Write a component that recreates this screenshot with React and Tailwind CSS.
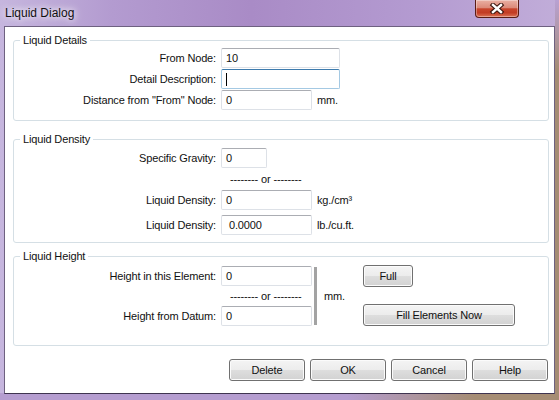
const box =
  "h-[20px] border border-[#dde1e7] border-t-[#abadb3] rounded-[2px] bg-white flex items-center pl-[4px]";
const btn =
  "h-[22px] border border-[#707070] rounded-[3px] bg-[linear-gradient(180deg,#f4f4f4_0%,#ececec_50%,#dedede_50%,#d2d2d2_100%)] shadow-[inset_0_0_0_1px_#fbfbfb] flex items-center justify-center";

const Label = ({ children }) => (
  <div className="w-[203px] text-right pr-[1px]">{children}</div>
);

const Legend = ({ children }) => (
  <legend className="ml-[6px] px-[3px] leading-[13px]">{children}</legend>
);

const Or = () => <div className="pl-[9px]">-------- or --------</div>;

export default function App() {
  return (
    <div className="w-[559px] h-[400px] flex flex-col text-[#111] font-['Liberation_Sans',Arial,sans-serif] text-[11px] tracking-[-0.15px] [background:linear-gradient(180deg,#b8a1d2_0px,#a58c73_70px)_right_top/4px_100%_no-repeat,linear-gradient(90deg,#b59dd0_62%,#a68d74_85%)_left_bottom/100%_7px_no-repeat,linear-gradient(90deg,#c6b6de_0%,#b39bd0_20%,#a98bc6_45%,#b49bd1_75%,#c1add9_100%)]">
      {/* title bar */}
      <div className="h-[26px] flex items-start justify-between">
        <span className="pl-[5px] pt-[4px] text-[12px] tracking-normal [text-shadow:0_0_6px_#fff,0_0_10px_rgba(255,255,255,0.9)]">
          Liquid Dialog
        </span>
        <div className="mr-[40px] w-[44px] h-[18px] border border-t-0 border-[#5a1c14] rounded-b-[4px] bg-[linear-gradient(180deg,#eab0a3_0%,#dc8a79_45%,#c8452c_52%,#c23c24_75%,#dc7356_100%)] shadow-[inset_0_0_0_1px_rgba(255,255,255,0.35)] flex items-center justify-center">
          <svg width="16" height="11" viewBox="0 0 16 11">
            <path d="M4 2 L12 9 M12 2 L4 9" stroke="#3e1710" strokeWidth="4.6" strokeLinecap="square" />
            <path d="M4 2 L12 9 M12 2 L4 9" stroke="#ffffff" strokeWidth="2.4" strokeLinecap="square" />
          </svg>
        </div>
      </div>

      {/* client area */}
      <div className="ml-[4px] w-[551px] h-[368px] border border-[#6e6180] border-b-[#3f3450] bg-white flex flex-col">
        {/* Liquid Details */}
        <fieldset className="ml-[8px] mt-[7px] w-[536px] border border-[#d5dfe5] rounded-[3px] pt-[1px] pb-[10px]">
          <Legend>Liquid Details</Legend>
          <div className="flex flex-col gap-[1px]">
            <div className="flex items-center gap-[4px]">
              <Label>From Node:</Label>
              <div className={`${box} w-[119px]`}>10</div>
            </div>
            <div className="flex items-center gap-[4px]">
              <Label>Detail Description:</Label>
              <div className="h-[20px] w-[119px] border border-[#a4c9e3] border-t-[#3d7bad] rounded-[2px] bg-white flex items-center pl-[4px]">
                <span className="w-[1px] h-[13px] bg-black" />
              </div>
            </div>
            <div className="flex items-center gap-[4px]">
              <Label>Distance from "From" Node:</Label>
              <div className={`${box} w-[91px]`}>0</div>
              <span className="ml-[1px]">mm.</span>
            </div>
          </div>
        </fieldset>

        {/* Liquid Density */}
        <fieldset className="ml-[8px] mt-[12px] w-[536px] border border-[#d5dfe5] rounded-[3px] pt-[2px] pb-[7px]">
          <Legend>Liquid Density</Legend>
          <div className="flex flex-col">
            <div className="flex items-center gap-[4px]">
              <Label>Specific Gravity:</Label>
              <div className={`${box} w-[46px]`}>0</div>
            </div>
            <div className="h-[22px] flex items-center pl-[207px]">
              <Or />
            </div>
            <div className="flex items-center gap-[4px]">
              <Label>Liquid Density:</Label>
              <div className={`${box} w-[91px]`}>0</div>
              <span className="ml-[1px]">kg./cm³</span>
            </div>
            <div className="flex items-center gap-[4px] mt-[5px]">
              <Label>Liquid Density:</Label>
              <div className={`${box} w-[91px] pl-[7px]`}>0.0000</div>
              <span className="ml-[1px]">lb./cu.ft.</span>
            </div>
          </div>
        </fieldset>

        {/* Liquid Height */}
        <fieldset className="ml-[8px] mt-[7px] w-[536px] border border-[#d5dfe5] rounded-[3px] pt-[3px] pb-[19px]">
          <Legend>Liquid Height</Legend>
          <div className="flex">
            <div className="flex flex-col">
              <div className="flex items-center gap-[4px]">
                <Label>Height in this Element:</Label>
                <div className={`${box} w-[91px]`}>0</div>
              </div>
              <div className="h-[20px] flex items-center pl-[207px]">
                <Or />
              </div>
              <div className="flex items-center gap-[4px]">
                <Label>Height from Datum:</Label>
                <div className={`${box} w-[91px]`}>0</div>
              </div>
            </div>
            <div className="ml-[2px] w-[3px] mt-[1px] mb-[1px] bg-[#a3a3a3]" />
            <div className="ml-[7px] w-[39px] self-center">mm.</div>
            <div className="flex flex-col justify-between -mt-[1px]">
              <div className={`${btn} w-[50px]`}>Full</div>
              <div className={`${btn} w-[152px] h-[21px]`}>Fill Elements Now</div>
            </div>
          </div>
        </fieldset>

        {/* dialog buttons */}
        <div className="mt-[13px] mr-[6px] flex justify-end gap-[5px]">
          <div className={`${btn} w-[76px]`}>Delete</div>
          <div className={`${btn} w-[76px] border-[#3c7fb1] shadow-[inset_0_0_0_1px_#b9e1f9]`}>OK</div>
          <div className={`${btn} w-[76px]`}>Cancel</div>
          <div className={`${btn} w-[76px]`}>Help</div>
        </div>
      </div>
    </div>
  );
}
